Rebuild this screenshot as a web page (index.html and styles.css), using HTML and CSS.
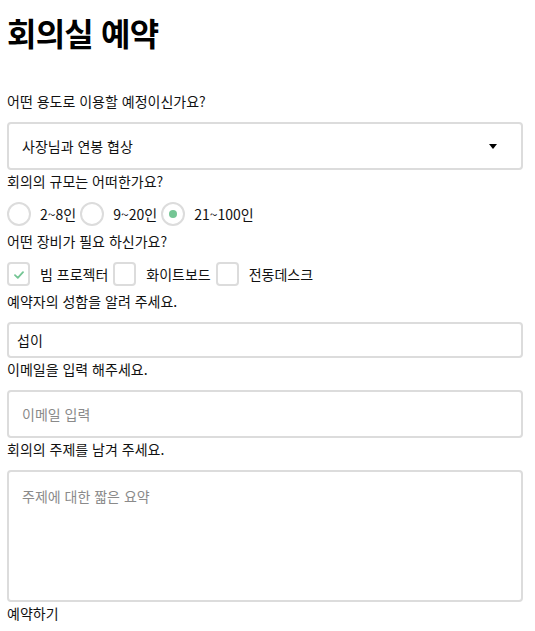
FILE: index.html
```html
<!DOCTYPE html>
<html lang="ko">
<head>
<meta charset="utf-8">
<title>회의실 예약</title>
<link rel="stylesheet" href="styles.css">
</head>
<body>
<main class="page">
  <h1 class="title">회의실 예약</h1>
  <form class="form">
    <label class="label">어떤 용도로 이용할 예정이신가요?</label>
    <div class="select">
      <span class="select-value">사장님과 연봉 협상</span>
      <span class="select-arrow"></span>
    </div>

    <label class="label">회의의 규모는 어떠한가요?</label>
    <div class="options">
      <span class="option"><span class="radio"></span><span class="opt-text">2~8인</span></span>
      <span class="option"><span class="radio"></span><span class="opt-text">9~20인</span></span>
      <span class="option"><span class="radio checked"><span class="dot"></span></span><span class="opt-text">21~100인</span></span>
    </div>

    <label class="label">어떤 장비가 필요 하신가요?</label>
    <div class="options options-check">
      <span class="option"><span class="check"><svg class="tick" width="10" height="8" viewBox="0 0 10 8"><path d="M1 4.2 L3.8 6.8 L9 1.2" fill="none" stroke="#74c594" stroke-width="1.8" stroke-linecap="round" stroke-linejoin="round"/></svg></span><span class="opt-text">빔 프로젝터</span></span>
      <span class="option"><span class="check"></span><span class="opt-text">화이트보드</span></span>
      <span class="option"><span class="check"></span><span class="opt-text">전동데스크</span></span>
    </div>

    <label class="label">예약자의 성함을 알려 주세요.</label>
    <input class="field field-name" type="text" value="섭이">

    <label class="label">이메일을 입력 해주세요.</label>
    <input class="field field-email" type="text" placeholder="이메일 입력">

    <label class="label">회의의 주제를 남겨 주세요.</label>
    <textarea class="field field-area" placeholder="주제에 대한 짧은 요약"></textarea>

    <div class="submit">예약하기</div>
  </form>
</main>
</body>
</html>
```

FILE: styles.css
```css
* { box-sizing: border-box; }

html, body {
  margin: 0;
  padding: 0;
  background: #fff;
}

body {
  font-family: "Noto Sans CJK KR", "Noto Sans", sans-serif;
  font-size: 14px;
  color: #111;
}

.page {
  padding: 0 7px;
  width: 530px;
}

.title {
  margin: 12px 0 40px;
  font-size: 32px;
  line-height: 40px;
  font-weight: 700;
  letter-spacing: -0.8px;
  color: #000;
}

.form {
  width: 516px;
}

.label {
  display: block;
  line-height: 18px;
  margin: 2px 0 12px;
}

.select {
  height: 48px;
  border: 2px solid #dcdcdc;
  border-radius: 4px;
  display: flex;
  align-items: center;
  justify-content: space-between;
  padding: 0 24px 0 13px;
}

.select-value {
  line-height: 18px;
}

.select-arrow {
  width: 0;
  height: 0;
  border-left: 4px solid transparent;
  border-right: 4px solid transparent;
  border-top: 5px solid #000;
}

.options {
  display: flex;
  align-items: center;
  height: 24px;
  margin-bottom: 6px;
}

.option {
  display: flex;
  align-items: center;
}

.opt-text {
  margin: 0 4px 0 9px;
  line-height: 18px;
}

.options-check .opt-text {
  margin: 0 5px 0 10px;
}

.radio {
  width: 24px;
  height: 24px;
  border: 2px solid #dcdcdc;
  border-radius: 50%;
  display: flex;
  align-items: center;
  justify-content: center;
}

.dot {
  width: 8px;
  height: 8px;
  border-radius: 50%;
  background: #74c594;
}

.check {
  width: 23px;
  height: 24px;
  border: 2px solid #dcdcdc;
  border-radius: 4px;
  display: flex;
  align-items: center;
  justify-content: center;
}

.tick {
  display: block;
  margin-top: 2px;
}

.field {
  display: block;
  width: 100%;
  border: 2px solid #dcdcdc;
  border-radius: 4px;
  font-family: inherit;
  font-size: 14px;
  color: #111;
  outline: none;
  margin: 0;
  background: #fff;
}

.field::placeholder {
  color: #8a8a8a;
}

.field-name {
  height: 36px;
  padding: 0 8px;
}

.field-email {
  height: 48px;
  padding: 0 13px;
}

.field-area {
  height: 132px;
  padding: 15px 13px;
  line-height: 18px;
  resize: none;
}

.submit {
  margin-top: 2px;
  line-height: 18px;
}
```
